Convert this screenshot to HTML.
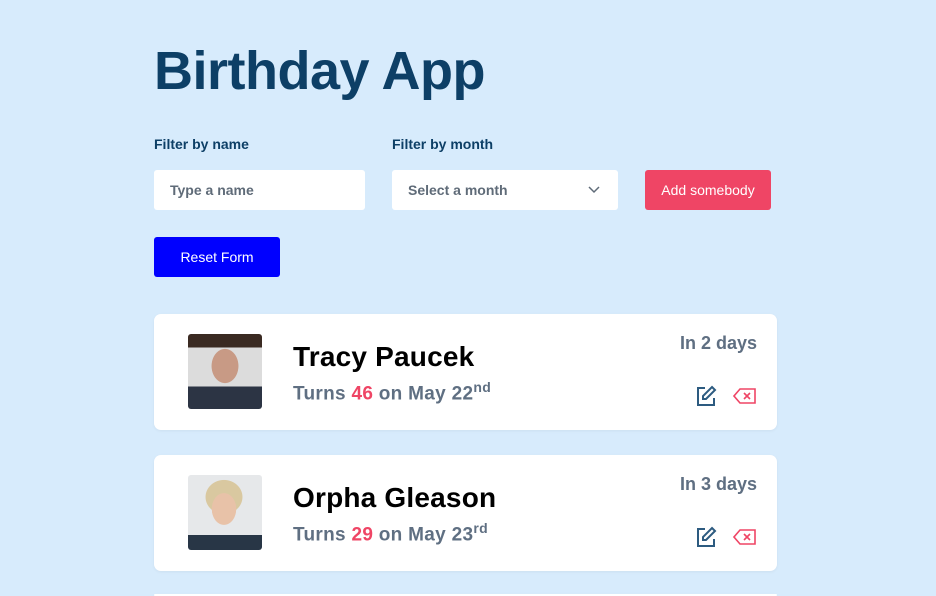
<!DOCTYPE html>
<html><head><meta charset="utf-8"><style>
*{box-sizing:border-box;margin:0;padding:0}
html,body{width:936px;height:596px;overflow:hidden}
body{background:#d7ebfc;font-family:"Liberation Sans",sans-serif;position:relative}
h1{position:absolute;left:154px;top:40px;font-size:54px;font-weight:700;color:#0d3f66;letter-spacing:-0.5px}
.lbl{position:absolute;top:136px;font-size:14px;font-weight:700;color:#0d3f66}
.box{position:absolute;top:170px;height:40px;background:#fff;border-radius:3px;font-size:14px;font-weight:700;color:#5f6b78;padding:12px 16px}
.btn{position:absolute;border-radius:3px;color:#fff;font-size:14px;text-align:center;line-height:40px}
.card{position:absolute;left:154px;width:623px;height:116px;background:#fff;border-radius:7px;box-shadow:0 1px 3px rgba(0,0,0,.05)}
.ph{position:absolute;left:34px;top:20px;width:74px;height:75px;border-radius:3px}
.nm{position:absolute;left:139px;top:27px;font-size:28px;font-weight:700;color:#000;letter-spacing:0.2px}
.sub{position:absolute;left:139px;top:65px;font-size:19px;font-weight:700;color:#5f6f82;letter-spacing:0.3px}
.sub b{color:#ef4565}
.sub sup{font-size:14px}
.days{position:absolute;right:20px;top:19px;font-size:18px;font-weight:700;color:#5f6f82}
.ic{position:absolute;top:71px}
</style></head><body>
<h1>Birthday App</h1>
<div class="lbl" style="left:154px">Filter by name</div>
<div class="lbl" style="left:392px">Filter by month</div>
<div class="box" style="left:154px;width:211px">Type a name</div>
<div class="box" style="left:392px;width:226px">Select a month<svg style="position:absolute;right:18px;top:16px" width="12" height="8" viewBox="0 0 12 8"><path d="M1 1l5 5 5-5" stroke="#5f6b78" stroke-width="1.5" fill="none"/></svg></div>
<div class="btn" style="left:645px;top:170px;width:126px;height:40px;background:#ef4565">Add somebody</div>
<div class="btn" style="left:154px;top:237px;width:126px;height:40px;background:#0000ff">Reset Form</div>

<div class="card" style="top:314px">
<div class="ph" style="background:radial-gradient(ellipse 22px 28px at 37px 32px,#c89a85 60%,transparent 62%),linear-gradient(#3a2a22 0 18%,#dcdcdc 18% 70%,#2c3444 70%)"></div>
<div class="nm">Tracy Paucek</div>
<div class="sub">Turns <b>46</b> on May 22<sup>nd</sup></div>
<div class="days">In 2 days</div>
<svg class="ic" style="left:541px" width="22" height="22" viewBox="0 0 22 22"><path d="M10 3H3v17h16v-7" stroke="#2d5b80" stroke-width="2" fill="none"/><path d="M17 2l3 3-9 9H8v-3z" stroke="#2d5b80" stroke-width="2" fill="none"/></svg>
<svg class="ic" style="left:579px;top:73px" width="24" height="18" viewBox="0 0 24 18"><path d="M7 2h15v14H7L1 9z" stroke="#ef4565" stroke-width="1.6" fill="none"/><path d="M11 6l6 6M17 6l-6 6" stroke="#ef4565" stroke-width="1.6"/></svg>
</div>

<div class="card" style="top:455px">
<div class="ph" style="background:radial-gradient(ellipse 20px 26px at 36px 34px,#e8c2a8 60%,transparent 62%),radial-gradient(ellipse 26px 24px at 36px 22px,#d9c8a0 70%,transparent 72%),linear-gradient(#e6e8ea 0 80%,#283646 80%)"></div>
<div class="nm">Orpha Gleason</div>
<div class="sub">Turns <b>29</b> on May 23<sup>rd</sup></div>
<div class="days">In 3 days</div>
<svg class="ic" style="left:541px" width="22" height="22" viewBox="0 0 22 22"><path d="M10 3H3v17h16v-7" stroke="#2d5b80" stroke-width="2" fill="none"/><path d="M17 2l3 3-9 9H8v-3z" stroke="#2d5b80" stroke-width="2" fill="none"/></svg>
<svg class="ic" style="left:579px;top:73px" width="24" height="18" viewBox="0 0 24 18"><path d="M7 2h15v14H7L1 9z" stroke="#ef4565" stroke-width="1.6" fill="none"/><path d="M11 6l6 6M17 6l-6 6" stroke="#ef4565" stroke-width="1.6"/></svg>
</div>
<div class="card" style="top:594px;height:2px"></div>
</body></html>
